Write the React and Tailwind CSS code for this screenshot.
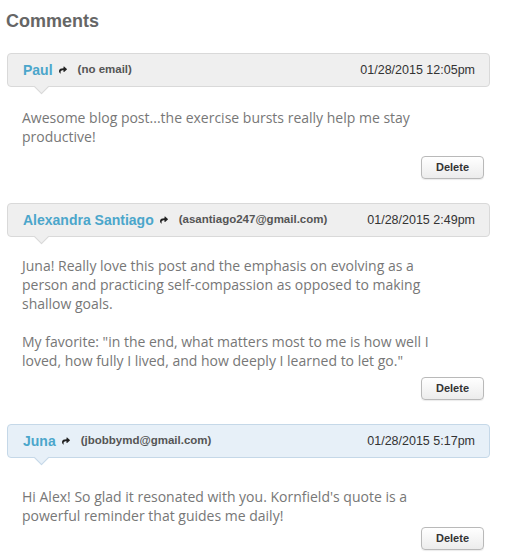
import { FaShare } from "react-icons/fa";

const comments = [
    {
        name: "Paul",
        email: "(no email)",
        date: "01/28/2015 12:05pm",
        textTop: "pt-[21px]",
        buttonTop: "mt-[10px]",
        paragraphs: [
            "Awesome blog post...the exercise bursts really help me stay productive!",
        ],
    },
    {
        name: "Alexandra Santiago",
        email: "(asantiago247@gmail.com)",
        date: "01/28/2015 2:49pm",
        textTop: "pt-[19px]",
        buttonTop: "mt-[7px]",
        paragraphs: [
            "Juna! Really love this post and the emphasis on evolving as a person and practicing self-compassion as opposed to making shallow goals.",
            "My favorite: \"in the end, what matters most to me is how well I loved, how fully I lived, and how deeply I learned to let go.\"",
        ],
    },
    {
        name: "Juna",
        email: "(jbobbymd@gmail.com)",
        date: "01/28/2015 5:17pm",
        author: true,
        textTop: "pt-[29px]",
        buttonTop: "mt-[2px]",
        paragraphs: [
            "Hi Alex! So glad it resonated with you. Kornfield's quote is a powerful reminder that guides me daily!",
        ],
    },
];

const Comment = ({ comment }) => {
    const box = comment.author
        ? "bg-[#e7f0f8] border-[#c5d8e8]"
        : "bg-[#efefef] border-[#d9d9d9]";

    return (
        <div className="mb-[24px]">
            <div
                className={`relative flex items-center justify-between h-[34px] pl-[15px] pr-[14px] border rounded-[4px] ${box}`}
            >
                <div className="flex items-center">
                    <span className="text-[14px] font-bold text-[#4ba6cb]">
                        {comment.name}
                    </span>
                    <FaShare className="ml-[6px] w-[8px] h-[8px] text-[#222]" />
                    <span className="ml-[11px] text-[11.5px] font-bold text-[#555]">
                        {comment.email}
                    </span>
                </div>
                <span className="text-[12.5px] text-[#333]">{comment.date}</span>

                {/* pointer under the header */}
                <div
                    className={`absolute left-[28px] bottom-[-6px] w-[11px] h-[11px] rotate-45 border-r border-b ${box}`}
                />
            </div>

            <div
                className={`pl-[15px] pr-[35px] ${comment.textTop} text-[14px] leading-[19px] text-[#777] space-y-[19px]`}
                style={{ fontFamily: '"Open Sans", "Liberation Sans", sans-serif' }}
            >
                {comment.paragraphs.map((p, i) => (
                    <p key={i}>{p}</p>
                ))}
            </div>

            <div className={`flex justify-end pr-[6px] ${comment.buttonTop}`}>
                <button className="h-[23px] w-[63px] text-[11px] font-bold text-[#333] border border-[#b9b9b9] rounded-[4px] bg-gradient-to-b from-white to-[#ececec] shadow-[0_1px_1px_rgba(0,0,0,0.08)]">
                    Delete
                </button>
            </div>
        </div>
    );
};

const App = () => {
    return (
        <div
            className="w-[507px] h-[560px] bg-white overflow-hidden"
            style={{ fontFamily: '"Liberation Sans", Arial, sans-serif' }}
        >
            <h2 className="pl-[6px] pt-[9px] text-[18px] leading-[24px] font-bold text-[#666]">
                Comments
            </h2>
            <div className="ml-[7px] w-[483px] mt-[20px]">
                {comments.map((c, i) => (
                    <Comment key={i} comment={c} />
                ))}
            </div>
        </div>
    );
};

export default App;
